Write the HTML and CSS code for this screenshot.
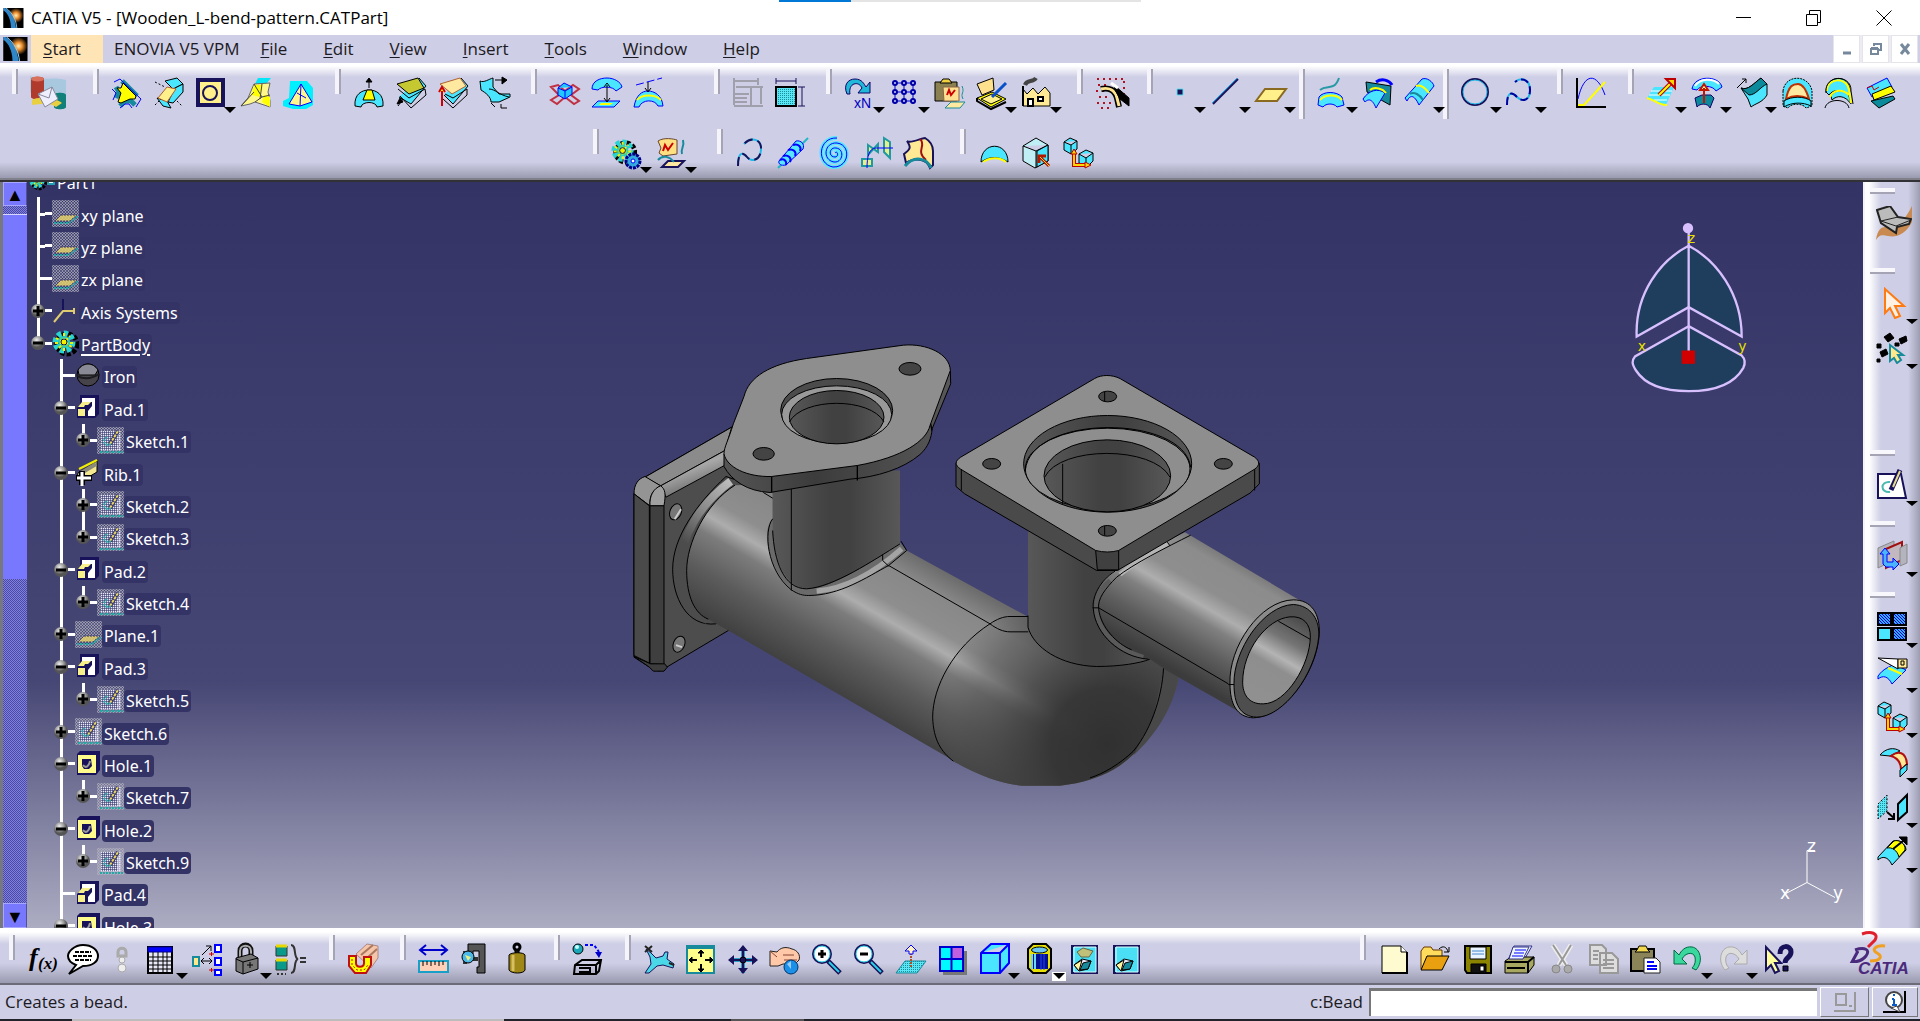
FILE: index.html
```html
<!DOCTYPE html>
<html lang="en">
<head>
<meta charset="utf-8">
<title>CATIA V5 - [Wooden_L-bend-pattern.CATPart]</title>
<link rel="stylesheet" href="styles.css">
</head>
<body>
<svg class="defs" aria-hidden="true">
  <defs>
    <linearGradient id="earth" x1="0" y1="1" x2="1" y2="0"><stop offset=".3" stop-color="#2f86c8"/><stop offset=".48" stop-color="#7cc4ee"/><stop offset=".52" stop-color="#000"/></linearGradient>
    <radialGradient id="sun"><stop offset="0" stop-color="#fff3c0"/><stop offset=".4" stop-color="#f09030"/><stop offset="1" stop-color="#f09030" stop-opacity="0"/></radialGradient>
    <radialGradient id="ball" cx=".4" cy=".3"><stop offset="0" stop-color="#eee"/><stop offset=".6" stop-color="#999"/><stop offset="1" stop-color="#555"/></radialGradient>
    <pattern id="dots" width="3" height="3" patternUnits="userSpaceOnUse"><circle cx="1.5" cy="1.5" r="1" fill="none" stroke="#b4b4c0" stroke-width=".9"/></pattern>
    <pattern id="whitedots" width="2" height="2" patternUnits="userSpaceOnUse"><rect width="1.4" height="1.4" fill="#e8e8ff"/></pattern>
    <pattern id="mesh" width="2" height="2" patternUnits="userSpaceOnUse"><rect width="2" height="2" fill="#5ae6f5"/><rect width="1" height="1" fill="#1a8f9c"/></pattern>
    <pattern id="bluemesh" width="3" height="3" patternUnits="userSpaceOnUse"><rect width="3" height="3" fill="#39a8ff"/><path d="M0 0L3 3" stroke="#00c"/></pattern>
  </defs>
  <symbol id="app" viewBox="0 0 24 24"><path d="M0 0H24V24H0Z" fill="#000"/><circle cx="15" cy="9" r="9" fill="url(#sun)"/><path d="M2 0C10 5 14 14 15 24H9C9 14 5 6 0 3V0Z" fill="#2f86c8"/><path d="M3 0C11 6 15 14 16 24" fill="none" stroke="#8fd4ff"/><path d="M0 3C5 8 8 15 8 24H0Z" fill="#000"/></symbol>
  <symbol id="plus" viewBox="0 0 14 14"><circle cx="7" cy="7" r="7" fill="url(#ball)"/><path d="M7 2V12M2 7H12" stroke="#000" stroke-width="3"/></symbol>
  <symbol id="minus" viewBox="0 0 14 14"><circle cx="7" cy="7" r="7" fill="url(#ball)"/><path d="M2 7H12" stroke="#000" stroke-width="3"/></symbol>
  <symbol id="plane" viewBox="0 0 27 27"><path d="M0 0H27V27H0Z" fill="url(#dots)"/><path d="M9 15H25L18 21H3Z" fill="#e8d568" fill-opacity=".8" stroke="#333366" stroke-dasharray="2 1"/><path d="M2 23H17L26 16" fill="none" stroke="#27a6a6" stroke-width="2" stroke-dasharray="2 1"/></symbol>
  <symbol id="sketch" viewBox="0 0 27 27"><path d="M0 0H27V27H0Z" fill="url(#dots)"/><path d="M4 4H20V23H4Z" fill="#333366"/><path d="M4 4H24V24H4Z" fill="url(#whitedots)"/><path d="M13 17L21 4" stroke="#333366" stroke-width="4"/><path d="M13 17L21 4" stroke="#e8d568" stroke-width="2" stroke-dasharray="3 1"/><path d="M10 10C4 14 8 20 14 17M3 25H27" fill="none" stroke="#27a6a6" stroke-width="2" stroke-dasharray="2 1"/></symbol>
  <symbol id="pad" viewBox="0 0 27 27"><path d="M5 1H24V20L20 24H2V14L5 11Z" fill="#18125a"/><path d="M7 4H20V22H13V17L17 12V8H11L7 11Z" fill="#fff"/><path d="M3 15H10V22H3ZM3 13L7 8H16L13 11H10L9 13Z" fill="#f7f08a"/></symbol>
  <symbol id="hole" viewBox="0 0 27 27"><path d="M5 1H25V20L21 25H2V4Z" fill="#18125a"/><path d="M3 5H21V23H3Z" fill="#fffa8c"/><path d="M7 9H16L17 16L14 19H9L7 16Z" fill="#18125a"/><path d="M8 15C11 19 14 16 15 11" fill="none" stroke="#999" stroke-width="2"/></symbol>
  <symbol id="gear" viewBox="0 0 27 27"><circle cx="15" cy="14" r="10" fill="none" stroke="#000" stroke-width="5" stroke-dasharray="4 2"/><circle cx="12" cy="12" r="8.500" fill="none" stroke="#26d4d4" stroke-width="6" stroke-dasharray="4 2.600"/><circle cx="12" cy="12" r="6" fill="#2fd0b0"/><path d="M4 8L20 17M7 18L18 6M12 3V21M3 13H21" stroke="#f3f000" stroke-width="2" stroke-dasharray="3 2"/><circle cx="12" cy="12" r="3" fill="#f3f000" stroke="#115"/></symbol>
  <symbol id="boxes" viewBox="0 0 32 32"><path d="M2 5L8 1L15 4V12L9 17L2 13Z M2 5L9 8L15 4M9 8V17M17 17L24 13L31 16V24L25 30L17 26Z M17 17L24 21L31 16M24 21V30" class="fc"/><path d="M12 15V28H25" fill="none" stroke="#b00" stroke-width="4"/><path d="M12 14V28H27" fill="none" stroke="#ffd800" stroke-width="2"/><path d="M9 17L12 12L15 17ZM23 25L29 28L23 31Z" fill="#ffd800" stroke="#b00"/></symbol>
</svg>

<div class="app">
  <header class="titlebar">
    <div class="progress"><i></i></div>
    <svg class="logo-sm"><use href="#app"/></svg>
    <h1>CATIA V5 - [Wooden_L-bend-pattern.CATPart]</h1>
    <div class="winctl">
      <button aria-label="Minimize"><svg viewBox="0 0 16 16"><path d="M0 7.500H15"/></svg></button>
      <button aria-label="Restore"><svg viewBox="0 0 16 16"><path d="M.5 4.500H11.500V15.500H.5ZM3.500 4.500V.5H14.500V12.500H11.500"/></svg></button>
      <button aria-label="Close"><svg viewBox="0 0 16 16"><path d="M.5 .5L15.500 15.500M15.500 .5L.5 15.500"/></svg></button>
    </div>
  </header>

  <nav class="menubar">
    <svg class="logo-md"><use href="#app"/></svg>
    <button class="start"><u>S</u>tart</button>
    <button class="vpm">ENOVIA V5 VPM</button>
    <button><u>F</u>ile</button>
    <button><u>E</u>dit</button>
    <button><u>V</u>iew</button>
    <button><u>I</u>nsert</button>
    <button><u>T</u>ools</button>
    <button><u>W</u>indow</button>
    <button><u>H</u>elp</button>
    <div class="mdi">
      <button aria-label="Minimize document"><svg viewBox="0 0 16 16"><path d="M4 12H12" stroke-width="3"/></svg></button>
      <button aria-label="Restore document"><svg viewBox="0 0 16 16"><path d="M3 8H10V13H3ZM3 7H10M6 5V3H13V9H11M6 3H13" stroke-width="2"/></svg></button>
      <button aria-label="Close document"><svg viewBox="0 0 16 16"><path d="M4 3L12 13M12 3L4 13" stroke-width="3"/></svg></button>
    </div>
  </nav>

  <div class="toolbar">
    <div class="row row-top">
      <div class="group">
        <button aria-label="Save data in database"><svg class="wide" viewBox="0 0 36 34"><path d="M0 0C12 6 20 0 36 4V24C20 20 10 26 0 16Z" fill="#a8c8e0" stroke="none"/><path d="M1 3C1 0 14 0 14 3V21C14 24 1 24 1 21Z" fill="#b03a2c" stroke="none"/><ellipse cx="7.500" cy="3" rx="6.500" ry="2.500" fill="#d8705c" stroke="none"/><path d="M24 19C24 16 36 16 36 19V31C36 34 24 34 24 31Z" fill="#12807a" stroke="none"/><path d="M2 24C8 20 26 22 32 27L26 31C20 26 10 28 2 29Z" fill="#e8d040" stroke="none"/><path d="M8 18L22 11L28 23L15 31Z" fill="#eef" stroke="#889"/><path d="M8 18L19 22L22 11" fill="none" stroke="#889"/></svg></button>
      </div>
      <div class="group">
        <button aria-label="Junction"><svg viewBox="0 0 32 32"><path d="M11 4L26 19M5 10L8 15L5 21M9 29L14 24H20L24 28" fill="none" stroke="#178a9c" stroke-width="5"/><path d="M3 5L9 2L30 22L25 30M1 12L5 16L2 23M9 31L14 27H18L21 31" fill="none" class="sb"/><path d="M12 6L25 19L24 22H19L10 26L7 25L10 16L6 11L10 11Z" class="fy"/></svg></button>
        <button aria-label="Bend"><svg viewBox="0 0 32 32"><path d="M12 4L24 1L30 7L20 12ZM4 21L14 24L18 31L10 29Z" class="fc"/><path d="M22 11L30 7V15L20 26L15 25Z" class="fc"/><path d="M14 10L23 12L14 25L5 21Z" class="fp" stroke="#b06030"/><path d="M2 5L12 10M2 28L8 22M24 24L29 29" stroke-dasharray="2 2"/></svg></button>
        <button class="dd" aria-label="Hole"><svg viewBox="0 0 32 32"><path d="M3 3H28V28H3Z" fill="#fff08c" stroke="#18125a" stroke-width="4"/><circle cx="15" cy="16" r="7" fill="none" stroke="#18125a" stroke-width="2"/></svg></button>
        <button aria-label="Flange"><svg viewBox="0 0 32 32"><path d="M18 1H31L26 7H15Z" fill="#00e8f8" stroke="none"/><path d="M14 7L30 6L28 15L30 24V30L15 25L10 27L1 29L8 21Z" fill="#fff78c" stroke="#666"/><path d="M14 8L22 8L20 20L12 18ZM24 18L30 20V30L22 25Z" class="fy" stroke="none"/><path d="M14 7L22 20L30 18M22 20L15 25M22 7L20 22M1 29L14 15" fill="none" stroke="#444"/></svg></button>
        <button aria-label="Extrusion"><svg viewBox="0 0 32 32"><path d="M8 4L25 4L31 11V28L24 32H11L1 29V24L7 21Z" fill="#00f0ff" stroke="none"/><path d="M19 7L30 25L18 29L7 27Z" fill="#fff78c" class="sb"/><path d="M19 7L18 29M15 16L24 21" fill="none" class="sb"/></svg></button>
      </div>
      <div class="group">
        <button aria-label="Bump"><svg viewBox="0 0 32 32"><path d="M2 29C1 17 9 13 16 13S31 17 30 29L24 30C23 24 9 24 8 30Z" class="fc"/><path d="M10 23L14 13H19L22 23Z" class="fy"/><path d="M16 11V4" /><path d="M13 5L16 1L19 5Z" class="fk"/></svg></button>
        <button aria-label="Wrap curve"><svg viewBox="0 0 32 32"><path d="M24 1L31 9L16 27L4 20" class="fc" /><path d="M2 7L23 1L29 11L14 17Z" fill="#c6c832"/><path d="M3 12L14 21L30 12L31 18L16 31L5 19M3 29L8 22" fill="none"/><path d="M5 21L2 27L8 25Z" class="fk"/></svg></button>
        <button aria-label="Wrap surface"><svg viewBox="0 0 32 32"><path d="M24 1L31 9L16 27L7 18" class="fc"/><path d="M3 7L23 1L29 9L15 17Z" fill="#ffe9a0" stroke="#b06030"/><path d="M8 17L16 21L30 12V18L16 31L6 22" fill="none"/><path d="M5 29V14M2 15L5 10L8 15" stroke="#c00" class="fy" stroke-width="2"/></svg></button>
        <button aria-label="Shape morphing"><svg viewBox="0 0 32 32"><path d="M1 4C5 6 10 2 14 1V10L20 17H31V20L20 25H12C12 20 7 16 2 13Z" class="fc"/><path d="M10 12C16 12 20 18 30 20M16 3H26M12 26L16 30M22 27V31H28" fill="none"/><path d="M23 0L28 3L23 7Z" class="fk"/></svg></button>
      </div>
      <div class="group">
        <button aria-label="Axis transformation"><svg viewBox="0 0 32 32"><path d="M2 10L9 8L16 14L24 8L30 12L22 18L30 24L25 27L16 20L8 27L2 23L10 18Z" fill="none" stroke="#c03040" stroke-width="2"/><path d="M9 11L15 6L23 10V17L16 22L9 18ZM9 11L16 14L23 10M16 14V22" fill="#20c8ff" class="sb"/></svg></button>
        <button aria-label="Transfer"><svg viewBox="0 0 32 32"><path d="M1 12C1 4 9 1 16 1S30 5 31 10L25 14C22 9 10 9 7 13Z" class="fc sb"/><path d="M7 24H29L23 30H1Z" class="fc sb"/><path d="M10 26H22L19 28H8Z" class="fy" stroke="none"/><path d="M16 8V24M13 10L16 6L19 10M13 21L16 25L19 21" fill="none"/></svg></button>
        <button aria-label="Project"><svg viewBox="0 0 32 32"><path d="M3 8L29 1" class="sb" stroke-dasharray="8 3"/><path d="M1 30C3 18 9 14 15 14S29 18 30 29L25 29C22 22 9 22 6 30Z" class="fc sb"/><path d="M4 23C9 17 22 17 28 23" fill="none" class="sy"/><path d="M15 5V14M12 11L15 15L18 11" fill="none"/></svg></button>
      </div>
      <div class="group">
        <button aria-label="Dimensions off" class="off"><svg viewBox="0 0 32 32"><path d="M2 1V28M26 1V8M2 4H26M4 10H19V28M14 10H31M29 10V27M2 17H17M2 21H15M2 25H15M2 29H31" fill="none" stroke="#a0a0ac" stroke-width="2"/></svg></button>
        <button aria-label="Dimensions"><svg viewBox="0 0 32 32"><path d="M2 10H22V29H2Z" fill="url(#mesh)"/><path d="M2 1V7M22 1V7M2 4H22M24 10H31M24 29H31M28 10V29" fill="none" stroke="#18125a"/><path d="M2 10H22V29H2Z" fill="none" stroke-width="2"/></svg></button>
      </div>
      <div class="group">
        <button class="dd" aria-label="Object repetition"><svg viewBox="0 0 32 32"><path d="M3 17C-1 8 4 2 11 2S20 7 22 10L26 5V16H14L18 11C16 7 13 6 10 7S5 12 6 17Z" fill="#20b8d8" stroke="#106"/><text x="10" y="31" class="xn">xN</text></svg></button>
        <button class="dd" aria-label="Points and planes repetition"><svg viewBox="0 0 32 32"><path d="M6 3V27M15 3V27M24 3V27M3 6H27M3 15H27M3 24H27" fill="none" stroke="#00c"/><g fill="#cecee6" stroke="#00a" stroke-width="2"><circle cx="6" cy="6" r="2"/><circle cx="15" cy="6" r="2"/><circle cx="24" cy="6" r="2"/><circle cx="6" cy="15" r="2"/><circle cx="15" cy="15" r="2"/><circle cx="24" cy="15" r="2"/><circle cx="6" cy="24" r="2"/><circle cx="15" cy="24" r="2"/><circle cx="24" cy="24" r="2"/></g></svg></button>
        <button aria-label="Paste geometry"><svg viewBox="0 0 32 32"><path d="M1 5H23V24H1Z" fill="#8a8050"/><path d="M6 6L9 2H15L18 6Z" fill="#f0d040"/><path d="M9 10H25V24H10Z" fill="#ffe090" stroke="#864"/><path d="M13 18L15 13L17 18L21 13" fill="none" stroke="#c00" stroke-width="2"/><path d="M17 25H31L26 31H11ZM28 9C31 16 26 16 29 22" fill="#ffe9a0" stroke="#178a9c"/></svg></button>
        <button class="dd" aria-label="Catalog"><svg viewBox="0 0 32 32"><path d="M1 7L17 1L18 13L6 18Z" fill="#ffe08c"/><path d="M1 21L16 15L30 22L15 30Z" class="fy"/><path d="M5 22L16 17L26 22L15 27Z" class="fp"/><path d="M1 21V24L15 32L30 25" fill="none" stroke-width="2"/><path d="M30 6L16 20" stroke="#0a50c8" stroke-width="3"/></svg></button>
        <button class="dd" aria-label="Power copy"><svg viewBox="0 0 32 32"><path d="M2 12L6 17L12 11L17 17L24 10L29 16V29H2Z" fill="#ffe994"/><path d="M2 9V29M7 22H12V29H7ZM17 20H22V24H17Z" fill="#fff" stroke-width="2"/><path d="M4 8C6 2 12 6 15 1" fill="none" stroke="#444" stroke-width="4"/></svg></button>
      </div>
      <div class="group">
        <button aria-label="Optimizer"><svg viewBox="0 0 36 34" class="wide"><path d="M2 3H28M3 9H12M1 15H10M4 21H14M2 27H18M6 32H18M29 5V18" stroke="#b01020" stroke-width="2" stroke-dasharray="2 4"/><path d="M6 13C14 11 20 14 22 22L24 31" fill="none" stroke="#000" stroke-width="6"/><path d="M6 13C14 11 20 14 22 22L24 30" fill="none" stroke="#ffe490" stroke-width="3"/><path d="M19 9L34 22V30L25 23L20 14Z" class="fk"/><path d="M16 7L23 12" stroke="#fff" stroke-width="3"/></svg></button>
      </div>
      <div class="group">
        <button class="dd" aria-label="Point"><svg viewBox="0 0 32 32"><path d="M12 12H18V18H12Z" fill="#18125a" stroke="#5ae0f0"/></svg></button>
        <button class="dd" aria-label="Line"><svg viewBox="0 0 32 32"><path d="M3 27L28 2" stroke="#18125a" stroke-width="2"/><path d="M2 26L27 1" stroke="#20a8e8"/></svg></button>
        <button class="dd" aria-label="Plane"><svg viewBox="0 0 32 32"><path d="M10 12H31L22 24H1Z" class="fp" stroke="#8a6a20" stroke-width="2"/></svg></button>
      </div>
      <div class="group bar">
        <button class="dd" aria-label="Sweep"><svg viewBox="0 0 32 32"><path d="M3 13C10 7 17 15 22 1" fill="none" stroke="#279aa6" stroke-width="2"/><path d="M2 20C6 14 20 14 25 20L27 28L20 30C17 26 9 26 6 30L1 28Z" class="fc sb"/><path d="M3 23C8 17 20 17 25 23" fill="none" class="sy"/></svg></button>
        <button aria-label="Adaptive sweep"><svg viewBox="0 0 32 32"><path d="M4 5L29 9L28 28L5 15Z" fill="#178a9c"/><path d="M14 5C20 1 27 3 30 8" fill="none" class="sb" stroke-width="3"/><path d="M1 22C7 13 16 11 23 16L14 31C10 21 6 22 3 25Z" class="fc sb"/><path d="M8 13C13 9 21 12 24 16" fill="none" class="sy" stroke-width="3"/></svg></button>
        <button class="dd" aria-label="Loft"><svg viewBox="0 0 32 32"><path d="M1 21L18 2C23 0 29 5 30 9L15 28C10 17 6 18 3 24Z" class="fc sb"/><path d="M12 9C17 7 22 12 25 16" fill="none" class="sy"/><path d="M6 17C10 14 16 18 19 23" fill="none" stroke="#178a9c" stroke-width="2"/></svg></button>
      </div>
      <div class="group bar">
        <button class="dd" aria-label="Circle"><svg viewBox="0 0 32 32"><circle cx="14" cy="15" r="13" fill="none" stroke="#18125a" stroke-width="2"/><circle cx="14" cy="15" r="12" fill="none" stroke="#20b8e8"/></svg></button>
        <button class="dd" aria-label="Spline"><svg viewBox="0 0 32 32"><path d="M1 28C1 14 6 15 11 20S24 24 24 13S15 0 9 5" fill="none" stroke="#20b8e8" stroke-width="2"/><path d="M1 28C1 14 6 15 11 20S24 24 24 13S15 0 9 5" fill="none" stroke="#00009c" stroke-width="2" stroke-dasharray="8 4"/></svg></button>
      </div>
      <div class="group">
        <button aria-label="Law"><svg viewBox="0 0 32 32"><path d="M2 1V30H31" fill="none" stroke-width="2"/><path d="M3 22C9-5 22-5 30 18" fill="none" class="sb"/><path d="M3 28H9L30 5" fill="none" class="sy" stroke-width="3"/></svg></button>
      </div>
      <div class="group">
        <button class="dd" aria-label="Extrapolate"><svg viewBox="0 0 32 32"><path d="M1 21L8 10H28L20 28C12 27 8 22 1 21Z" class="fc" stroke="none"/><path d="M5 14H26M3 18H24M8 23H21" stroke="#fff"/><path d="M1 21C9 23 14 29 21 28" fill="none" class="sy" stroke-width="3"/><path d="M13 18L24 7" stroke="#b00" stroke-width="4"/><path d="M13 18L24 7" class="sy"/><path d="M20 2H29V11L26 8L23 5Z" stroke="#b00" fill="#ffd800" stroke-width="2"/></svg></button>
        <button class="dd" aria-label="Offset"><svg viewBox="0 0 32 32"><path d="M1 12C3-2 28-2 31 10L25 14C22 8 9 8 6 13Z" class="fc sb"/><path d="M4 9C9 1 22 1 28 7" fill="none" stroke="#fff" stroke-width="2"/><path d="M4 21L11 18H20L23 21L19 31C17 26 9 26 6 30Z" fill="#0a8a9a" stroke="#106"/><path d="M13 26V11M9 13L13 7L17 13Z" fill="#ffa" stroke="#c01800" stroke-width="2"/></svg></button>
        <button class="dd" aria-label="Thick surface"><svg viewBox="0 0 32 32"><path d="M5 11C12 14 18 6 25 1L31 7V18C26 26 20 26 15 30L12 22Z" class="fc"/><path d="M5 11C12 14 18 6 25 1L31 7C24 10 20 18 13 18Z" fill="#0a8a9a"/><path d="M1 11L10 2M6 2H10V6" fill="none"/></svg></button>
        <button aria-label="Fillet"><svg viewBox="0 0 32 32"><path d="M2 14C4-3 28-3 31 14V29L25 31C22 26 10 26 7 31L2 29Z" class="fc" stroke-dasharray="2 1"/><path d="M5 22C8 8 12 7 17 7S25 12 28 22C20 18 12 18 5 22Z" fill="#ffe9a0" stroke="#c03000" stroke-width="2"/><path d="M3 24C10 19 24 19 30 24V29C22 25 11 25 3 30Z" class="fc"/></svg></button>
        <button aria-label="Shape fillet"><svg viewBox="0 0 32 32"><path d="M3 15C3-3 27-3 27 14L26 18C19 12 10 12 6 18Z" class="fc"/><path d="M8 19C12 12 22 12 26 19L28 27C22 18 14 18 9 23Z" class="fc"/><path d="M2 31C4 21 24 21 26 31" fill="none"/><path d="M4 14C4 0 25 0 26 13L28 26M7 20C11 12 20 12 26 18" fill="none" class="sy"/><path d="M3 16C1-3 29-3 28 14L30 27" fill="none"/></svg></button>
        <button aria-label="Healing"><svg viewBox="0 0 32 32"><path d="M2 11L22 1L27 10L7 20Z" class="fc sb"/><path d="M7 17L26 9L30 15L9 23Z" class="fy"/><path d="M6 24L28 19L30 22L14 31Z" fill="#0a8a9a"/><path d="M2 11L7 9L9 13L14 10" fill="none" stroke="#c00"/></svg></button>
      </div>
    </div>
    <div class="row row-second">
      <div class="group">
        <button class="dd" aria-label="Bodies"><svg viewBox="0 0 32 32"><use href="#gear" width="26" height="30"/><circle cx="22" cy="24" r="7" fill="#3ad" stroke="#008" stroke-width="3" stroke-dasharray="3 1"/><circle cx="22" cy="24" r="2" fill="#fff" class="sb"/></svg></button>
        <button class="dd" aria-label="Geometrical set"><svg viewBox="0 0 32 32"><path d="M2 4C8 0 18 2 21 3V17L7 19L3 16L5 11Z" fill="#ffe080" stroke="#643"/><path d="M7 14L9 8L12 13L17 6" fill="none" stroke="#c00" stroke-width="2"/><path d="M12 24H28L22 30H6Z" fill="#ffe9a0" stroke="#18125a" stroke-width="2"/><path d="M2 23C7 17 14 20 18 25M27 3C29 10 24 12 26 17" fill="none" stroke="#178a9c" stroke-width="2"/></svg></button>
      </div>
      <div class="group">
        <button aria-label="Curve"><svg viewBox="0 0 32 32"><path d="M3 29C3 14 8 15 12 20S25 24 26 13S16-1 9 7" fill="none" stroke="#20b8e8" stroke-width="2"/><path d="M3 29C3 14 8 15 12 20S25 24 26 13S16-1 9 7" fill="none" stroke="#18125a" stroke-width="2" stroke-dasharray="9 5"/></svg></button>
        <button aria-label="Helix"><svg viewBox="0 0 32 32"><path d="M1 31L31 1" stroke="#20b8c8" stroke-width="2"/><path d="M2 24L19 4C24 3 28 7 26 12L9 28C4 29 1 27 2 24Z" fill="#5ae6ff" class="sb"/><path d="M6 19C11 17 15 21 13 25M11 13C16 11 20 15 18 19M16 8C21 6 25 10 23 14M3 23C7 21 10 24 9 28" fill="none" class="sb" stroke-width="2"/></svg></button>
        <button aria-label="Spiral"><svg viewBox="0 0 32 32"><path d="M16 16C19 13 20 20 16 20C9 20 10 10 17 11C26 12 24 26 15 25C3 23 5 5 18 6C33 8 30 31 14 30C-3 27-1 0 18 1" fill="none" stroke="#5ae6ff" stroke-width="4"/><path d="M16 16C19 13 20 20 16 20C9 20 10 10 17 11C26 12 24 26 15 25C3 23 5 5 18 6C33 8 30 31 14 30C-3 27-1 0 18 1" fill="none" class="sb"/></svg></button>
        <button aria-label="Spine"><svg viewBox="0 0 32 32"><path d="M1 22H11V29H1ZM7 8L17 15V7L7 18ZM23 1L29 5V21L23 15Z" fill="#e8f08c" stroke="#209aa0" stroke-width="2"/><path d="M6 31C6 20 8 11 15 11H32" fill="none" class="sb"/></svg></button>
        <button aria-label="Isoparametric curve"><svg viewBox="0 0 32 32"><path d="M4 4C8 7 18 1 22 1C27 4 30 8 30 14V28L27 31C24 22 12 20 3 26L1 17C8 12 8 10 4 4Z" fill="#ffe994" stroke="#18125a" stroke-width="2"/><path d="M17 2C24 8 12 14 23 23" fill="none" stroke="#a01010" stroke-width="2"/><path d="M2 29C11 18 24 21 28 31" fill="none" stroke="#178a9c" stroke-width="3"/></svg></button>
      </div>
      <div class="group">
        <button aria-label="Bead"><svg viewBox="0 0 32 32"><path d="M3 25C3 4 30 4 30 25C20 19 12 19 3 25Z" class="fc"/><path d="M5 25C12 20 22 20 28 25" fill="none" class="sy" stroke-width="4"/></svg></button>
        <button aria-label="Extract box"><svg viewBox="0 0 32 32"><path d="M3 9L16 1L28 8V24L15 31L3 24ZM3 9L16 14L28 8M16 14V31" fill="#bfeef5"/><path d="M17 14L28 8V24L17 30Z" class="fc"/><path d="M29 29L20 20M19 26V19H26" fill="none" stroke="#b01800" stroke-width="3"/><path d="M29 29L20 20" stroke="#ffd800"/></svg></button>
        <button aria-label="Translate bodies"><svg viewBox="0 0 32 32"><use href="#boxes"/></svg></button>
      </div>
    </div>
  </div>

  <main class="work">
    <div class="scroll" role="presentation">
      <button aria-label="Scroll up">▲</button>
      <div class="track"><div class="thumb"></div></div>
      <button aria-label="Scroll down">▼</button>
    </div>
    <div class="viewport">
      <svg class="scene" viewBox="27 182 1836 745" aria-label="3D view">
        <defs>
          <linearGradient id="pipe" gradientUnits="userSpaceOnUse" x1="-69" y1="120" x2="-309" y2="534"><stop offset="0" stop-color="#6c6c6c"/><stop offset=".14" stop-color="#888"/><stop offset=".34" stop-color="#8e8e8e"/><stop offset=".44" stop-color="#adadad"/><stop offset=".54" stop-color="#7c7c7c"/><stop offset=".75" stop-color="#5c5c5c"/><stop offset="1" stop-color="#404040"/></linearGradient>
          <linearGradient id="pipe2" gradientUnits="userSpaceOnUse" x1="42" y1="73" x2="-148" y2="402"><stop offset="0" stop-color="#777"/><stop offset=".1" stop-color="#8c8c8c"/><stop offset=".32" stop-color="#8e8e8e"/><stop offset=".45" stop-color="#aeaeae"/><stop offset=".56" stop-color="#808080"/><stop offset=".75" stop-color="#5e5e5e"/><stop offset="1" stop-color="#3c3c3c"/></linearGradient>
          <linearGradient id="bore" x1=".85" y1="0" x2=".4" y2="1"><stop offset="0" stop-color="#484848"/><stop offset=".3" stop-color="#747474"/><stop offset=".5" stop-color="#b4b4b4"/><stop offset=".62" stop-color="#8e8e8e"/><stop offset="1" stop-color="#909090"/></linearGradient>
          <linearGradient id="vert"><stop offset="0" stop-color="#585858"/><stop offset=".45" stop-color="#414141"/><stop offset=".6" stop-color="#414141"/><stop offset="1" stop-color="#585858"/></linearGradient>
          <radialGradient id="dark" gradientUnits="userSpaceOnUse" cx="1460" cy="1240" r="560"><stop offset="0" stop-color="#303030"/><stop offset=".3" stop-color="#333" stop-opacity=".95"/><stop offset=".5" stop-color="#3c3c3c" stop-opacity=".75"/><stop offset=".75" stop-color="#4c4c4c" stop-opacity=".45"/><stop offset="1" stop-color="#666" stop-opacity="0"/></radialGradient>
          <linearGradient id="edge"><stop offset="0" stop-color="#555"/><stop offset=".4" stop-color="#3c3c3c"/><stop offset="1" stop-color="#585858"/></linearGradient>
          <linearGradient id="round" x1="0" y1="0" x2=".5" y2="1"><stop offset="0" stop-color="#8d8d8d"/><stop offset=".5" stop-color="#a8a8a8"/><stop offset="1" stop-color="#606060"/></linearGradient>
          <linearGradient id="fillet" gradientUnits="userSpaceOnUse" x1="330" y1="450" x2="200" y2="640"><stop offset="0" stop-color="#bdbdbd"/><stop offset=".5" stop-color="#8a8a8a"/><stop offset="1" stop-color="#4c4c4c"/></linearGradient>
        </defs>
        <g transform="translate(620 330) scale(.33333)" stroke="#000" stroke-width="3" stroke-linejoin="round">
          <!-- rear flange -->
          <path d="M42 490L75 440L335 290L440 470V840L325 900L140 1010L118 1022L92 1012L42 980Z" fill="#4d4d4d"/>
          <path d="M75 440L335 290L315 360L122 466Z" fill="#8b8b8b"/>
          <path d="M122 466L315 360V404L138 500Z" fill="url(#round)"/>
          <path d="M42 490C42 460 56 444 75 438L122 466C95 480 88 500 90 526Z" fill="#949494"/>
          <path d="M90 526C88 496 100 474 122 466C136 476 138 490 132 526Z" fill="#a0a0a0"/>
          <path d="M42 490L88 526V998L42 975Z" fill="#4a4a4a"/><path d="M90 526H132V1002L90 1000Z" fill="#3f3f3f"/>
          <path d="M42 978L92 1000H134L142 1010L132 1022H100L88 1010Z" fill="#3d3d3d"/>
          <ellipse cx="167" cy="544" rx="17" ry="25" transform="rotate(22 167 544)" fill="#777"/><ellipse cx="177" cy="941" rx="17" ry="25" transform="rotate(22 177 941)" fill="#777"/>
          <path d="M164 566L183 536M168 944L186 950" stroke="#ccc" stroke-width="6"/>
          <!-- main tube and its root fillet -->
          <path d="M318 438C230 520 158 620 158 716C158 800 200 890 288 880L400 800L440 480Z" fill="#4c4c4c"/>
          <path d="M332 452C240 520 180 620 180 716C178 790 205 850 262 868" fill="none" stroke="url(#fillet)" stroke-width="24"/>
          <path d="M345 464C255 520 200 640 200 720C200 800 225 850 265 866L325 900L1000 1290L1230 1220L1240 868L860 660L500 460Z" fill="url(#pipe)" stroke="none"/>
          <path d="M345 464C255 520 200 640 200 720C200 800 225 850 265 866" fill="none"/>
          <!-- elbow -->
          <path d="M1110 880C1000 950 938 1070 938 1160C940 1230 965 1265 1000 1292C1090 1345 1170 1365 1220 1366H1320C1390 1358 1440 1340 1480 1318C1580 1260 1660 1130 1676 1040L1590 860H1225C1170 856 1140 860 1110 880Z" fill="url(#pipe)" stroke="none"/>
          <path d="M1110 880C1000 950 938 1070 938 1160C940 1230 965 1265 1000 1292C1090 1345 1170 1365 1220 1366H1320C1390 1358 1440 1340 1480 1318C1580 1260 1660 1130 1676 1040L1590 860H1225C1170 856 1140 860 1110 880Z" fill="url(#dark)" stroke="none"/>
          <path d="M1676 1040C1660 1130 1610 1210 1540 1275L1600 1160L1631 1010Z" fill="#484848" stroke="none"/>
          <path d="M1110 880C1000 950 938 1070 938 1160C940 1230 965 1265 1000 1292M1631 1000C1630 1080 1600 1190 1540 1262C1500 1300 1450 1330 1410 1342M788 690L806 705L1110 880C1130 895 1150 904 1170 904H1225M1110 880C1130 866 1150 858 1170 858H1225" fill="none"/>
          <!-- first branch -->
          <path d="M458 470H840V636L860 660L806 705C740 740 640 795 565 795C500 790 440 700 441 610C442 590 450 570 458 565Z" fill="#6a6a6a" stroke="none"/>
          <path d="M590 782C670 776 760 730 845 655" fill="none" stroke="#a4a4a4" stroke-width="16"/>
          <path d="M458 420H840V638C760 690 640 775 560 775C500 775 460 690 458 600Z" fill="url(#vert)" stroke="none"/>
          <path d="M458 565C430 600 440 720 514 778C535 792 550 795 565 795C660 795 740 740 806 705L860 660L843 632M458 600C462 690 490 775 560 775C640 770 760 690 840 640M514 475V780M788 672V690L806 707M430 486L458 503" fill="none"/>
          <path d="M312 370V408C335 450 380 482 450 486L690 446C770 440 850 415 900 372C925 350 935 320 936 296L992 160L991 120Z" fill="url(#edge)"/>
          <path d="M340 280L372 198C386 140 450 100 560 84L850 44C920 38 990 70 991 120L930 285C920 330 850 380 712 405L455 438C380 440 320 410 312 370C312 350 325 330 340 280Z" fill="#8e8e8e"/>
          <path d="M455 438V486M712 405V450M932 280L936 300" fill="none" stroke-width="4"/>
          <ellipse cx="650" cy="240" rx="168" ry="96" fill="#4b4b4b"/><ellipse cx="650" cy="252" rx="165" ry="86" fill="#999"/><ellipse cx="650" cy="260" rx="142" ry="80" fill="url(#vert)"/>
          <path d="M508 274C550 200 750 200 792 274" fill="none"/>
          <ellipse cx="870" cy="115" rx="33" ry="19" fill="#444"/><ellipse cx="431" cy="370" rx="32" ry="19" fill="#444"/>
        </g>
        <g transform="translate(920 360) scale(.33333)" stroke="#000" stroke-width="3" stroke-linejoin="round">
          <!-- second branch -->
          <path d="M324 500V800C340 860 420 915 530 918C600 918 660 908 690 896L700 560Z" fill="url(#vert)" stroke="none"/>
          <path d="M324 765V800C340 860 420 915 530 918C600 918 660 908 690 896" fill="none"/>
          <!-- outlet tube -->
          <path d="M585 630C540 660 515 710 520 745C525 820 600 890 690 896L740 930L960 1055L1140 720L795 515L700 560Z" fill="url(#pipe2)"  stroke="none"/>
          <path d="M570 660C530 690 524 740 532 770C545 820 600 870 670 890" fill="none" stroke="#5a5a5a" stroke-width="14"/>
          <path d="M600 642C640 610 690 580 745 548" fill="none" stroke="#b4b4b4" stroke-width="14"/>
          <path d="M585 632C540 660 515 710 520 745C525 820 600 890 685 896M812 524C740 560 640 610 590 650C555 685 532 715 536 745C542 800 590 850 635 868M518 742H536L925 970M742 545L750 556" fill="none"/>
          <path d="M930 970C925 860 1020 720 1120 718C1175 718 1200 760 1198 820C1190 940 1090 1070 1000 1072C950 1070 930 1030 930 970Z" fill="#8a8a8a"/>
          <path d="M942 970C940 870 1030 735 1120 732C1175 735 1200 780 1196 830C1186 940 1090 1070 1010 1070C960 1068 942 1030 942 970Z" fill="#4e4e4e"/>
          <path d="M968 965C968 870 1040 775 1110 769C1150 766 1172 790 1171 830C1170 910 1100 1030 1030 1030C985 1032 968 1000 968 965Z" fill="url(#bore)"/>
          <path d="M1075 782L1170 836M925 972H942" fill="none"/>
          <!-- square flange -->
          <path d="M108 308V378L134 400L530 630H592L990 398L1018 370V308Z" fill="#4a4a4a"/>
          <path d="M527 570H596V628H532Z" fill="#404040"/>
          <path d="M524 54C545 42 575 42 600 54L1004 290C1020 302 1020 314 1004 326L596 570C575 576 550 576 527 570L122 326C104 314 104 302 122 290Z" fill="#8e8e8e"/>
          <path d="M124 326V390M1004 326V390" fill="none"/>
          <ellipse cx="563" cy="310" rx="252" ry="145" fill="url(#vert)"/><ellipse cx="563" cy="325" rx="247" ry="122" fill="#8e8e8e"/><path d="M316 330C330 160 790 160 812 320" fill="none"/>
          <ellipse cx="562" cy="346" rx="190" ry="108" fill="url(#vert)"/><path d="M374 350C420 255 700 255 750 350M428 310V430" fill="none"/>
          <g fill="#444"><ellipse cx="563" cy="108" rx="27" ry="16"/><ellipse cx="215" cy="310" rx="27" ry="16"/><ellipse cx="910" cy="310" rx="27" ry="16"/><ellipse cx="562" cy="511" rx="27" ry="16"/></g><path d="M554 94V122M554 497V525" fill="none"/>
        </g>
        <!-- compass -->
        <g transform="translate(1600 180) scale(.33333)" stroke="#d8c0ff" stroke-width="7" fill="#1f3d5c">
          <path d="M266 196C180 240 105 340 110 468L266 380L425 468C425 340 350 240 266 196Z"/>
          <path d="M266 437L105 528C95 540 95 550 108 570C140 620 200 632 266 632S400 615 430 562C438 545 435 535 425 525Z"/>
          <path d="M266 145V520"/><circle cx="264" cy="143" r="12" fill="#d8c0ff"/><path d="M245 510H285V550H245Z" fill="#d00000" stroke="none"/>
          <g class="axis-y"><text x="263" y="187">z</text><text x="113" y="513">x</text><text x="415" y="513">y</text></g>
        </g>
        <g class="triad"><path d="M1807 882V850H1815M1807 882L1784 894M1807 882L1835 897" fill="none" stroke="#fff"/><text x="1807" y="851">z</text><text x="1780" y="898">x</text><text x="1833" y="898">y</text></g>
      </svg>

      <ul class="tree">
        <li class="l0"><svg class="ic"><use href="#gear"/></svg><em></em><span>Part1</span></li>
        <li class="l1 v1"><b></b><i></i><svg class="ic"><use href="#plane"/></svg><span>xy plane</span></li>
        <li class="l1 v1"><b></b><i></i><svg class="ic"><use href="#plane"/></svg><span>yz plane</span></li>
        <li class="l1 v1"><b></b><i></i><svg class="ic"><use href="#plane"/></svg><span>zx plane</span></li>
        <li class="l1 v1"><svg class="nd"><use href="#plus"/></svg><i></i><svg class="ic" viewBox="0 0 27 27"><path d="M11 2V14" stroke="#18125a" stroke-width="2"/><path d="M2 25L11 14H23M22 11V17" fill="none" stroke="#e0cc70" stroke-width="2"/></svg><span>Axis Systems</span></li>
        <li class="l1 v1 end1"><svg class="nd"><use href="#minus"/></svg><i></i><svg class="ic"><use href="#gear"/></svg><span class="work-obj">PartBody</span></li>
        <li class="l2 v2"><b></b><i></i><svg class="ic" viewBox="0 0 27 27"><circle cx="13" cy="13" r="11" fill="#46444a"/><path d="M3 8C8 0 18 0 23 8L20 13H4Z" fill="#8a8a96"/><path d="M2 14C10 18 18 16 24 12" fill="none" stroke="#1c1c20" stroke-width="2"/></svg><span>Iron</span></li>
        <li class="l2 v2"><svg class="nd"><use href="#minus"/></svg><i></i><svg class="ic"><use href="#pad"/></svg><span>Pad.1</span></li>
        <li class="l3 v2 v3 end3"><svg class="nd"><use href="#plus"/></svg><i></i><svg class="ic"><use href="#sketch"/></svg><span>Sketch.1</span></li>
        <li class="l2 v2"><svg class="nd"><use href="#minus"/></svg><i></i><svg class="ic" viewBox="0 0 27 27"><path d="M3 14L22 2V13L12 19H2Z" fill="#f4e890" stroke="#000"/><path d="M6 14L21 5" stroke="#8c8a78" stroke-width="4"/><path d="M4 10L22 1" stroke="#f3f000" stroke-width="2"/><path d="M7 12V26M1 19H17" stroke="#000" stroke-width="6"/><path d="M7 13V27M2 19H16" stroke="#fff" stroke-width="3"/></svg><span>Rib.1</span></li>
        <li class="l3 v2 v3"><svg class="nd"><use href="#plus"/></svg><i></i><svg class="ic"><use href="#sketch"/></svg><span>Sketch.2</span></li>
        <li class="l3 v2 v3 end3"><svg class="nd"><use href="#plus"/></svg><i></i><svg class="ic"><use href="#sketch"/></svg><span>Sketch.3</span></li>
        <li class="l2 v2"><svg class="nd"><use href="#minus"/></svg><i></i><svg class="ic"><use href="#pad"/></svg><span>Pad.2</span></li>
        <li class="l3 v2 v3 end3"><svg class="nd"><use href="#plus"/></svg><i></i><svg class="ic"><use href="#sketch"/></svg><span>Sketch.4</span></li>
        <li class="l2 v2"><svg class="nd"><use href="#plus"/></svg><i></i><svg class="ic"><use href="#plane"/></svg><span>Plane.1</span></li>
        <li class="l2 v2"><svg class="nd"><use href="#minus"/></svg><i></i><svg class="ic"><use href="#pad"/></svg><span>Pad.3</span></li>
        <li class="l3 v2 v3 end3"><svg class="nd"><use href="#plus"/></svg><i></i><svg class="ic"><use href="#sketch"/></svg><span>Sketch.5</span></li>
        <li class="l2 v2"><svg class="nd"><use href="#plus"/></svg><i></i><svg class="ic"><use href="#sketch"/></svg><span>Sketch.6</span></li>
        <li class="l2 v2"><svg class="nd"><use href="#minus"/></svg><i></i><svg class="ic"><use href="#hole"/></svg><span>Hole.1</span></li>
        <li class="l3 v2 v3 end3"><svg class="nd"><use href="#plus"/></svg><i></i><svg class="ic"><use href="#sketch"/></svg><span>Sketch.7</span></li>
        <li class="l2 v2"><svg class="nd"><use href="#minus"/></svg><i></i><svg class="ic"><use href="#hole"/></svg><span>Hole.2</span></li>
        <li class="l3 v2 v3 end3"><svg class="nd"><use href="#plus"/></svg><i></i><svg class="ic"><use href="#sketch"/></svg><span>Sketch.9</span></li>
        <li class="l2 v2"><b></b><i></i><svg class="ic"><use href="#pad"/></svg><span>Pad.4</span></li>
        <li class="l2 v2"><svg class="nd"><use href="#minus"/></svg><i></i><svg class="ic"><use href="#hole"/></svg><span>Hole.3</span></li>
      </ul>
    </div>

    <aside class="side">
      <div class="vgroup">
        <button aria-label="Workbench"><svg class="wide" viewBox="0 0 36 34"><path d="M0 34C2 20 8 20 14 22S30 12 36 0V16C30 28 20 32 12 30S3 30 0 34Z" fill="#c98a52" stroke="none"/><path d="M1 4L14 0L22 11L35 13L33 18L21 21L20 27L5 17Z" fill="#bbb" stroke="#222" stroke-width="2"/><path d="M5 15L22 11M5 15L20 20L35 14" fill="none" stroke="#222"/></svg></button>
      </div>
      <div class="vgroup">
        <button class="dd" aria-label="Select"><svg viewBox="0 0 32 32"><path d="M9 2V26L14 21L19 31L24 29L19 19H28Z" fill="#fff0e4" stroke="#ff7a10" stroke-width="2"/></svg></button>
        <button class="dd" aria-label="Select trap"><svg viewBox="0 0 32 32"><path d="M8 5L14 1L18 6L12 10ZM23 7L30 4L31 9L25 12ZM4 20L10 17L12 22L6 25ZM1 12H5V16H1ZM1 27H4V30H1ZM19 11H23V14H19Z" class="fk"/><path d="M14 13V29L18 26L21 31L25 28L22 23H27Z" fill="#ffe98c" stroke="#178a9c" stroke-width="2"/></svg></button>
      </div>
      <div class="vgroup">
        <button class="dd" aria-label="Sketcher"><svg viewBox="0 0 32 32"><path d="M2 5H25L30 29H2Z" fill="#fff" stroke="#18125a" stroke-width="2"/><path d="M14 13C4 12 4 24 14 23" fill="none" stroke="#4cb8b0" stroke-width="2"/><path d="M24 1L15 21" stroke="#18125a" stroke-width="5"/><path d="M24 2L17 18" stroke="#e8dc8c" stroke-width="2"/></svg></button>
      </div>
      <div class="vgroup">
        <button class="dd" aria-label="Body in white"><svg viewBox="0 0 32 32"><path d="M2 8L18 1V20L2 28Z" fill="#b4b4be" stroke="#888"/><path d="M10 9L26 2V20L10 28Z" fill="#c4b8c0" stroke="#a01010" stroke-width="2"/><path d="M24 8L31 4V23L24 26Z" fill="#b4b4be" stroke="#888"/><path d="M7 24V14H4L9 8L14 14H11V22H17V18L23 24L17 30V27H10Z" fill="#4ab4ff" class="sb"/></svg></button>
      </div>
      <div class="vgroup">
        <button class="dd" aria-label="Assemble"><svg viewBox="0 0 32 32"><path d="M2 2H15V14H2ZM17 2H30V14H17ZM17 17H30V29H17Z" fill="url(#bluemesh)" stroke-width="2"/><path d="M2 17H15V29H2Z" class="fc" stroke-width="2"/></svg></button>
        <button class="dd" aria-label="Split"><svg viewBox="0 0 32 32"><path d="M2 20C8 12 12 12 18 8L30 14L16 28C12 20 7 19 2 23Z" class="fc sb"/><path d="M2 2L22 3V13Z" fill="#fff"/><path d="M12 12L26 18" class="sy" stroke-width="3"/><path d="M22 3H31V12H22ZM25 5H28V9H25Z" fill="#ffe994"/></svg></button>
        <button class="dd" aria-label="Translate"><svg viewBox="0 0 32 32"><use href="#boxes"/></svg></button>
        <button class="dd" aria-label="Edge fillet"><svg viewBox="0 0 32 32"><path d="M4 9C10 2 18 1 24 5L14 10Z" class="fc"/><path d="M15 10C22 4 30 6 31 18L25 24C25 16 22 12 15 10Z" fill="#ffe994" stroke="#b01010" stroke-width="2"/><path d="M24 24L31 18V24L24 31Z" class="fc"/></svg></button>
        <button class="dd" aria-label="Translate copy"><svg viewBox="0 0 32 32"><path d="M2 13L11 4V20L2 28Z" fill="url(#mesh)" stroke-dasharray="2 2"/><path d="M22 13L31 4V21L22 29Z" class="fc" stroke-width="2"/><path d="M11 21L18 27M18 22V28H12" fill="none" stroke-width="2"/></svg></button>
        <button class="dd" aria-label="Extrapolate surface"><svg viewBox="0 0 32 32"><path d="M2 21L17 5C23 3 30 8 30 14L16 29C12 20 6 20 2 24Z" class="fc"/><path d="M11 12L18 5C23 3 30 8 29 14L23 21C21 14 16 11 11 12Z" class="fy"/><path d="M17 13L27 5" stroke-width="2"/><path d="M23 1H31V9Z" class="fk"/></svg></button>
      </div>
    </aside>
  </main>

  <div class="bottombar">
    <div class="group tight">
      <button aria-label="Formula"><svg viewBox="0 0 32 32"><text x="2" y="23" class="fx">f</text><text x="11" y="26" class="fx2">(x)</text></svg></button>
      <button aria-label="Comment"><svg viewBox="0 0 32 32"><path d="M16 2C25 2 31 7 31 13S25 23 16 23L2 31L9 22C4 20 1 17 1 13S7 2 16 2Z" fill="#fff" stroke-width="2"/><path d="M8 9H24M6 13H26M8 17H24" stroke-width="2" stroke-dasharray="4 1"/></svg></button>
      <button aria-label="Link" class="off"><svg viewBox="0 0 32 32"><path d="M11 13V9C11 4 19 4 19 9V13Z" fill="none" stroke="#aaa" stroke-width="3"/><circle cx="15" cy="17" r="3" fill="#eee" stroke="#aaa"/><circle cx="15" cy="25" r="4" fill="#eee" stroke="#aaa"/></svg></button>
      <button class="dd" aria-label="Design table"><svg viewBox="0 0 32 32"><path d="M1 4H25V30H1Z" fill="#e8e8f8" stroke-width="2"/><path d="M1 4H25V9H1Z" fill="#00f" stroke="#008"/><path d="M6 9V30M11 9V30M16 9V30M20 9V30M1 14H25M1 18H25M1 22H25M1 26H25"/></svg></button>
      <button aria-label="Relations"><svg viewBox="0 0 32 32"><path d="M2 14H8V23H2Z" fill="#ffe98c" stroke="#178a9c" stroke-width="2"/><g fill="#fff" class="sb" stroke-width="2"><path d="M24 2H30V9H24ZM24 15H30V22H24ZM24 27H30V32H24Z"/></g><path d="M10 18H21M13 15L10 18L13 21M18 15L21 18L18 21M11 12L20 3M15 3H20V8" fill="none"/><path d="M18 11H23M20.500 9V13M18 27H23M20.500 25V29" stroke="#c00"/></svg></button>
      <button class="dd" aria-label="Lock"><svg viewBox="0 0 32 32"><path d="M9 14V8C9 0 20 0 20 8V14" fill="none" stroke="#111" stroke-width="5"/><path d="M9 14V8C9 1 20 1 20 8V14" fill="none" stroke="#aaa" stroke-width="2"/><path d="M5 15L20 11L27 15V26L12 31L5 28Z" fill="#777"/><path d="M5 16L12 19L27 15M12 19V31M19 19V25M16 22H22" fill="none"/></svg></button>
      <button aria-label="Equivalent dimensions"><svg viewBox="0 0 32 32"><path d="M1 3H12V13H1ZM1 17H12V27H1Z" fill="#0a9a8a" stroke="#333"/><path d="M1 3H12M1 17H12" stroke="#e8d800" stroke-width="3"/><path d="M16 2C22 2 18 15 23 16C18 17 22 30 16 30M25 15H31M25 19H31" fill="none" stroke="#333" stroke-width="2"/><path d="M2 31H11" stroke="#333" stroke-width="2" stroke-dasharray="2 2"/></svg></button>
    </div>
    <div class="group">
      <button aria-label="Apply material"><svg viewBox="0 0 32 32"><path d="M9 11L20 1L31 3V15L24 25Z" fill="#f6c4a8" stroke="#a88"/><path d="M14 12L26 2M19 16L30 6" stroke="#a87860" stroke-width="2"/><path d="M2 13H9V20C9 25 17 25 17 20V14H24V22L19 30H8L2 23Z" class="fy" stroke="#c01010" stroke-width="2"/><path d="M5 16V22L10 27H17L21 22" fill="none" stroke="#c01010" stroke-dasharray="2 2"/></svg></button>
    </div>
    <div class="group">
      <button aria-label="Measure between"><svg viewBox="0 0 32 32"><path d="M2 7H29M8 2L2 7L8 12M23 2L29 7L23 12" fill="none" stroke="#00c" stroke-width="2"/><path d="M1 18H30V29H1Z" fill="#ffd0b8" stroke="#18a0c8" stroke-width="2"/><path d="M5 18V23M9 18V22M13 18V23M17 18V22M21 18V23M25 18V22"/></svg></button>
      <button aria-label="Measure item"><svg viewBox="0 0 32 32"><path d="M8 1H25V30H17V24H19V8H13V11H8Z" fill="#555"/><path d="M5 8V21M13 16H18" stroke="#333" stroke-width="4"/><circle cx="8" cy="14" r="6" fill="#4ab8e8"/><path d="M5 12L11 14L8 18Z" fill="#e8f080" stroke="none"/></svg></button>
      <button aria-label="Measure inertia"><svg viewBox="0 0 32 32"><circle cx="15" cy="4" r="3" fill="none" stroke-width="3"/><path d="M13 7H17V12H13Z" fill="#111"/><path d="M7 12C9 9 22 9 23 12V27C22 31 9 31 7 27Z" fill="#a08818"/><path d="M11 12V28" stroke="#d8c060" stroke-width="3"/></svg></button>
    </div>
    <div class="group">
      <button aria-label="Create datum"><svg viewBox="0 0 32 32"><circle cx="6" cy="6" r="5" fill="#1aa8b8"/><circle cx="5" cy="4" r="2" fill="#cff" stroke="none"/><path d="M13 2H22L27 9" fill="none" class="sb" stroke-width="2" stroke-dasharray="3 2"/><path d="M23 9H30L27 15Z" fill="#00c" stroke="none"/><path d="M3 22L10 17H29L27 28L24 31H2ZM3 22H24L29 17M24 22V30M7 25H18V29H7" fill="none" stroke-width="2"/></svg></button>
    </div>
    <div class="group">
      <button aria-label="Fly mode"><svg viewBox="0 0 32 32"><path d="M3 6L8 10L13 15L20 13L22 9L25 9L24 16L31 21L30 25L20 22L14 23L6 30L2 30L8 21L7 14Z" fill="#4ad8e8" stroke="#18125a"/><path d="M2 3L9 9M9 3L2 9M26 20L31 22" stroke="#222" stroke-width="2"/></svg></button>
      <button aria-label="Fit all in"><svg viewBox="0 0 32 32"><path d="M2 4H29V30H2Z" fill="#ffff8c" stroke="#178a9c" stroke-width="2"/><path d="M1 4H30" stroke="#178a9c" stroke-width="4"/><path d="M16 14V8M16 21V27M12 17H6M20 17H26" stroke-width="2"/><path d="M13 10L16 7L19 10ZM13 26L16 29L19 26ZM7 14L4 17L7 20ZM25 14L28 17L25 20Z" class="fk"/></svg></button>
      <button aria-label="Pan"><svg viewBox="0 0 32 32"><path d="M16 4V30M3 17H29" stroke="#2aa0c8" stroke-width="4"/><path d="M16 4V30M3 17H29" stroke="#18125a" stroke-width="2"/><path d="M11 8L16 2L21 8ZM11 25L16 31L21 25ZM7 12L1 17L7 22ZM25 12L31 17L25 22Z" fill="#18125a" stroke="none"/><circle cx="16" cy="17" r="3" fill="#18125a"/></svg></button>
      <button aria-label="Rotate"><svg viewBox="0 0 32 32"><path d="M1 8V23H9L14 21H26L30 17C32 12 28 7 23 6C16 3 11 5 8 9Z" fill="#ffc8a8" stroke="#222"/><path d="M14 12H25M15 17H28M1 8L8 14" fill="none" stroke="#843"/><circle cx="22" cy="24" r="7" fill="#1a90e8" stroke="#036"/><path d="M18 21L22 18V26Z" fill="#9cf" stroke="none"/></svg></button>
      <button aria-label="Zoom in"><svg viewBox="0 0 32 32"><path d="M17 18L29 30" stroke="#18125a" stroke-width="5"/><path d="M18 19L28 29" stroke="#2ad0e8" stroke-width="2"/><circle cx="11" cy="11" r="9" fill="#fff" stroke="#18125a" stroke-width="2"/><circle cx="11" cy="11" r="8" fill="none" stroke="#2ad0e8"/><path d="M11 7V15M7 11H15" stroke-width="3"/></svg></button>
      <button aria-label="Zoom out"><svg viewBox="0 0 32 32"><path d="M17 18L29 30" stroke="#18125a" stroke-width="5"/><path d="M18 19L28 29" stroke="#2ad0e8" stroke-width="2"/><circle cx="11" cy="11" r="9" fill="#fff" stroke="#18125a" stroke-width="2"/><circle cx="11" cy="11" r="8" fill="none" stroke="#2ad0e8"/><path d="M7 11H15" stroke-width="3"/></svg></button>
      <button aria-label="Normal view"><svg viewBox="0 0 32 32"><path d="M10 18H31L22 30H1Z" fill="url(#mesh)" stroke="#178a9c"/><path d="M16 24V8" stroke="#b05020" stroke-width="2" stroke-dasharray="2 1"/><path d="M10 8L16 2L22 8H18V11H14V8Z" fill="#fff0c0" class="sb"/></svg></button>
      <button aria-label="Create multi-view"><svg viewBox="0 0 32 32"><path d="M6 8H30V32H6Z" fill="#777" stroke="none"/><path d="M3 4H26V28H3Z" fill="#00f8ff" stroke="#00c" stroke-width="2"/><path d="M15 5H25V15H15Z" fill="#c060e0" stroke="none"/><path d="M14.500 4V28M3 16H26" stroke="#00c" stroke-width="2"/></svg></button>
      <button class="dd" aria-label="Isometric view"><svg viewBox="0 0 32 32"><path d="M2 10L12 1H30V20L21 30H2ZM2 10H21L30 1M21 10V30" class="fc sb" stroke-width="2"/></svg></button>
      <button class="dd hot" aria-label="Shading with edges"><svg viewBox="0 0 32 32"><path d="M4 6L9 1H22L27 6V25L22 30H9L4 25Z" fill="#e8e000" stroke-width="2"/><path d="M7 11H24V26H7Z" fill="#001090" stroke="none"/><path d="M8 11V26M11 11V26" stroke="#6ad8f0" stroke-width="2"/><ellipse cx="15.500" cy="7" rx="8" ry="3" fill="#6ac8f0"/><path d="M17 11V27M20 11V27" stroke="#24f"/></svg></button>
      <button aria-label="Hide/Show"><svg viewBox="0 0 32 32"><path d="M3 3H28V30H3Z" fill="#4adff5" stroke="#18125a" stroke-width="2"/><path d="M5 4V29H27V4Z" fill="none" stroke="#dff"/><path d="M8 9L14 5L24 8L20 14H12Z" fill="#c0c078" stroke="#664"/><path d="M5 22L13 16L22 18L19 26L10 28Z" fill="#eef"/><path d="M5 22L13 17L10 28Z" fill="#fff8a0"/><path d="M14 20L22 18L19 26L11 27Z" fill="#178a9c"/></svg></button>
      <button aria-label="Swap visible space"><svg viewBox="0 0 32 32"><path d="M3 3H28V30H3Z" fill="#4adff5" stroke="#18125a" stroke-width="2"/><path d="M5 4V29H27V4Z" fill="none" stroke="#dff"/><path d="M5 22L13 16L22 18L19 26L10 28Z" fill="#eef"/><path d="M5 22L13 17L10 28Z" fill="#fff8a0"/><path d="M14 20L22 18L19 26L11 27Z" fill="#178a9c"/></svg></button>
    </div>
    <div class="group">
      <button aria-label="New"><svg viewBox="0 0 32 32"><path d="M4 3H23L29 9V30H4Z" fill="#fffbd0"/><path d="M29 9V30H4" fill="none" stroke-width="2"/><path d="M23 3V9H29" fill="#fff"/></svg></button>
      <button aria-label="Open"><svg viewBox="0 0 32 32"><path d="M1 8L4 4H11L13 7H22V26H1Z" fill="#ffdc5c" stroke="#630"/><path d="M7 13H29L22 27H1Z" fill="#e8a010"/><path d="M19 6C23 2 27 4 28 9M24 9H29V4" fill="none"/></svg></button>
      <button aria-label="Save"><svg viewBox="0 0 32 32"><path d="M3 3H29V30H5L3 27Z" fill="#8a8400" stroke-width="2"/><path d="M8 4H24V16H8Z" fill="#e8f4ff"/><path d="M10 8H22M10 11H22" stroke="#48c"/><path d="M9 21H24V30H9Z" fill="#111"/><path d="M18 23H22V28H18Z" fill="#fff"/></svg></button>
      <button aria-label="Print"><svg viewBox="0 0 32 32"><path d="M10 3H28L20 17H4Z" fill="#eef6ff" stroke="#338"/><path d="M12 6H24M10 10H22M8 13H20" class="sb"/><path d="M1 18L7 14H30V22L24 30H1Z" fill="#a8a860"/><path d="M9 4L5 16H19L25 4Z" fill="#eef6ff" stroke="#338"/><path d="M11 7H22M10 10H20M8 13H19" class="sb"/><path d="M1 19H24L30 14M24 19V30M3 25H21" fill="none" stroke-width="2"/></svg></button>
      <button aria-label="Cut" class="off"><svg viewBox="0 0 32 32"><path d="M7 2L20 22M25 2L13 22" stroke="#eee" stroke-width="5"/><path d="M7 2L20 22M25 2L13 22" stroke="#999" stroke-width="2"/><circle cx="10" cy="26" r="4" fill="#aaa" stroke="#888"/><circle cx="22" cy="26" r="4" fill="#aaa" stroke="#888"/></svg></button>
      <button aria-label="Copy" class="off"><svg viewBox="0 0 32 32"><path d="M2 2H14L18 6V22H2ZM12 10H24L30 16V30H12Z" fill="#ddd" stroke="#999" stroke-width="2"/><path d="M5 8H11M5 12H10M5 16H10M15 17H26M15 21H26M15 25H26" stroke="#999" stroke-width="2"/></svg></button>
      <button aria-label="Paste"><svg viewBox="0 0 32 32"><path d="M1 6H24V28H1Z" fill="#8a8458" stroke-width="2"/><path d="M7 7L9 3H16L18 7L20 9H5Z" fill="#f0d850"/><path d="M14 15H26L30 19V30H14Z" fill="#fff" stroke="#222"/><path d="M17 19H24M17 23H27M17 26H27" class="sb" stroke-width="2"/></svg></button>
      <button class="dd" aria-label="Undo"><svg viewBox="0 0 32 32"><path d="M2 7V21H15L10 16C13 10 21 8 23 14C24 20 22 23 20 25L24 27C32 18 28 5 20 4C13 3 9 8 7 12Z" fill="#3ad89c" stroke="#064"/></svg></button>
      <button class="dd off" aria-label="Redo"><svg viewBox="0 0 32 32"><path d="M30 7V21H17L22 16C19 10 11 8 9 14C8 20 10 23 12 25L8 27C0 18 4 5 12 4C19 3 23 8 25 12Z" fill="#ddd" stroke="#aaa"/></svg></button>
      <button aria-label="What's this"><svg viewBox="0 0 32 32"><path d="M4 4V27L9 22L13 30L17 28L13 20H19Z" fill="#ffff9c" stroke="#18125a" stroke-width="2"/><path d="M18 11C18 1 29 2 29 9C29 15 23 14 23 20" fill="none" stroke="#18125a" stroke-width="5"/><path d="M21 23H26V28H21Z" fill="#18125a"/></svg></button>
    </div>
    <div class="brand">
      <svg viewBox="0 0 50 32"><path d="M13 3C22 0 30 2 26 9L19 16" fill="none" stroke="#e0202c" stroke-width="3"/><path d="M6 19C15 16 22 18 17 25C13 30 8 31 3 31L9 20" fill="none" stroke="#4a2a7c" stroke-width="3"/><path d="M36 15C26 14 22 19 28 22S32 30 21 30" fill="none" stroke="#f0a020" stroke-width="3"/></svg>
      <span>CATIA</span>
    </div>
  </div>

  <footer class="status">
    <span class="hint">Creates a bead.</span>
    <label for="cmd">c:Bead</label>
    <input id="cmd" type="text">
    <button class="off" aria-label="Power input"><svg viewBox="0 0 24 22"><path d="M3 3H13V14H3ZM16 15H19M22 1V20H1" fill="none" stroke="#999" stroke-width="2"/></svg></button>
    <button aria-label="Messages"><svg viewBox="0 0 24 22"><path d="M22 0V21H0" fill="none" stroke-width="2"/><circle cx="11" cy="9" r="8" fill="#fff" stroke="#444" stroke-width="2"/><path d="M14 15L17 21L8 17Z" fill="#fff" stroke="#444"/><path d="M11 8V14M9 8H11M9 14H14M10 4H12" stroke="#0a5ac8" stroke-width="2"/></svg></button>
  </footer>
  <div class="taskedge"><i></i><i></i><i></i><i></i></div>
</div>
</body>
</html>
```
FILE: styles.css
```css
* { box-sizing: border-box; }
html, body { height: 100%; margin: 0; }
body { font: 17px/20px "Open Sans", "Noto Sans", sans-serif; color: #1c1a22; overflow: hidden; }
button { margin: 0; padding: 0; border: 0; background: none; font: inherit; color: inherit; }
svg { display: block; stroke: #000; stroke-width: 1; }
symbol, use, .defs { stroke: none; }
.defs { position: absolute; width: 0; height: 0; }
.fy { fill: #ffff00; } .fc { fill: #4ae6ff; } .fp { fill: #fff08c; } .fk { fill: #000; }
.sb { stroke: #0000ff; } .sy { stroke: #ffff00; stroke-width: 2; }
#boxes .fc { stroke: #000; }

.app { height: 100%; display: grid; grid-template-rows: 35px 28px 119px 1fr 57px 34px 2px; background: #cecee6; }

/* title */
.titlebar { position: relative; display: flex; align-items: center; gap: 7px; padding: 0 28px 0 3px; background: #fff; }
.titlebar h1 { margin: 0; font-size: 17px; font-weight: 400; color: #000; }
.progress { position: absolute; top: 0; left: 779px; width: 362px; height: 2px; background: #e4e4e4; }
.progress i { display: block; width: 72px; height: 2px; background: #0078d7; }
.logo-sm { width: 21px; height: 20px; }
.winctl { display: flex; gap: 54px; margin-left: auto; }
.winctl svg { width: 16px; height: 16px; fill: none; }

/* menu */
.menubar { display: flex; align-items: stretch; padding-right: 2px; }
.menubar > button { padding: 0 18px; text-underline-offset: 2px; }
.logo-md { width: 31px; height: 26px; padding: 2px 1px 0; }
.menubar > .start { width: 72px; padding: 0 20px 0 10px; background: #ffe4b5; }
.menubar > .vpm { padding: 0 3px 0 11px; }
.mdi { display: flex; gap: 2px; margin-left: auto; background: #ececf2; }
.mdi button { width: 27px; display: grid; place-items: center; background: #fff; border: 1px solid #e4e4ea; }
.mdi svg { width: 16px; height: 16px; stroke: #76899c; fill: none; }

/* toolbars */
.toolbar { padding-top: 6px; border-bottom: 4px solid #80808a; border-bottom-style: ridge;
  background: linear-gradient(#fff 0 3px, #cecee6 14px calc(100% - 16px), #9a9ab0 100%); }
.row { display: grid; height: 60px; }
.row-top { grid-template-columns: 81px 242px 196px 183px 112px 251px 70px 152px 144px 114px 71px 1fr; padding-left: 12px; }
.row-second { height: 49px; grid-template-columns: 124px 243px 1fr; padding-left: 593px; }
.group { display: flex; align-items: flex-start; }
.group::before { content: ""; flex: none; width: 4px; height: 25px; margin-right: 12px; background: #f4f4fa; border-right: 2px solid #a4a4b4; }
.group.bar::before { height: 50px; }
.group button { position: relative; flex: none; width: 42px; height: 40px; padding-top: 7px; }
.group button.dd { width: 45px; }
.group.tight button { width: 40px; } .group.tight button.dd { width: 44px; }
.group svg { width: 32px; height: 32px; overflow: visible; }
.group svg.wide, .vgroup svg.wide { width: 36px; height: 34px; }
.dd::after { content: ""; position: absolute; left: 29px; top: 38px; border: 6px solid transparent; border-top-color: #000; border-bottom: 0; }
.hot::before { content: ""; position: absolute; left: 28px; top: 37px; width: 14px; height: 9px; background: #fff; }
.xn { font: 14px "Liberation Sans", sans-serif; fill: #0000c0; stroke: none; }
.fx { font: italic 700 26px "Liberation Serif", serif; fill: #000; stroke: none; }
.fx2 { font: italic 700 17px "Liberation Serif", serif; fill: #000; stroke: none; }

/* work area */
.work { display: grid; grid-template-columns: 27px 1fr 57px; min-height: 0; }
.scroll { display: grid; grid-template-rows: 24px 1fr 25px; padding-left: 3px; background: #77777f; min-height: 0; }
.scroll button { background: #7878ff; border: 1px solid #a8a8ff; border-right-color: #5050a0; color: #000; font-size: 18px; line-height: 20px; }
.track { padding-top: 8px; background: repeating-conic-gradient(#4a4aa0 0 25%, #8080e4 0 50%) 0 0 / 2px 2px; }
.thumb { height: 53%; background: #7878ff; border-top: 1px solid #d8d8ff; }
.viewport { display: grid; min-width: 0; min-height: 0; overflow: hidden; background: linear-gradient(#333366, #474775 67%, #acacc2); }
.scene, .tree { grid-area: 1 / 1; }
.scene { width: 100%; height: 100%; min-height: 0; }
.axis-y text { font: 42px "DejaVu Sans", sans-serif; fill: #e8e000; stroke: none; }
.triad text { font: 17px "DejaVu Sans", sans-serif; fill: #fff; stroke: none; }

.tree { list-style: none; display: grid; grid-auto-rows: 1fr; width: max-content; min-height: 0; margin: -17px 0 -14px; padding: 0; font-family: "Noto Sans", "Open Sans", sans-serif; font-size: 16px; color: #fff; z-index: 1; }
.tree li { display: flex; align-items: center; min-height: 0; background-repeat: no-repeat; background-size: 3px 100%, 3px 100%; }
.tree .l0 { padding-left: 2px; }
.tree .l0 .ic { width: 18px; }
.tree em { width: 8px; height: 8px; background: #fff; border: 2px solid #20a0b0; }
.tree .l1 { padding-left: 4px; } .tree .l2 { padding-left: 27px; } .tree .l3 { padding-left: 49px; }
.tree .nd, .tree b { flex: none; width: 14px; height: 14px; }
.tree b { background: linear-gradient(#fff, #fff) 7px 6px / 7px 3px no-repeat; }
.tree i { flex: none; width: 7px; height: 3px; background: #fff; }
.tree .ic { flex: none; width: 27px; height: 27px; }
.tree span { margin-top: 4px; padding: 0 2px; border-radius: 4px; line-height: 22px; background: #333366; }
.tree .work-obj { text-decoration: underline; text-decoration-thickness: 2px; text-underline-offset: 3px; }
.v1 { background-image: linear-gradient(#fff, #fff); background-position: 10px 0; }
.v2 { background-image: linear-gradient(#fff, #fff); background-position: 33px 0; }
.v2.v3 { background-image: linear-gradient(#fff, #fff), linear-gradient(#fff, #fff); background-position: 33px 0, 55px 0; }
.tree .end1 { background-size: 3px 50%; }
.tree .end3 { background-size: 3px 100%, 3px 50%; }

/* side toolbar */
.side { padding: 6px 0 0 5px; background: linear-gradient(90deg, #fff 0 4px, #cecee6 16px calc(100% - 12px), #9c9cb2); display: grid; grid-template-rows: 80px 182px 71px 71px 1fr; align-content: start; border-left: 2px solid #f4f4f8; }
.vgroup::before { content: ""; display: block; width: 25px; height: 4px; background: #f8f8fc; border-bottom: 2px solid #a4a4b4; }
.vgroup { min-height: 0; }
.vgroup button { position: relative; display: block; width: 45px; height: 45px; padding: 12px 0 0 6px; }
.vgroup svg { width: 32px; height: 32px; }
.vgroup .dd::after { left: 36px; top: 45px; border-width: 5px 6px 0; }

/* bottom */
.bottombar { display: grid; grid-template-columns: 320px 71px 154px 71px 735px 1fr 71px; padding: 7px 0 0 9px; border-bottom: 2px solid #6c6c78; background: linear-gradient(#fff 0 4px, #cecee6 16px calc(100% - 20px), #9a9ab0 100%); min-height: 0; }
.brand { color: #4a2a7c; font: italic 700 17px/12px "Liberation Sans", sans-serif; }
.brand svg { width: 50px; height: 32px; margin: -4px 0 0; }
.brand span { display: block; padding-left: 9px; }
.status { display: grid; grid-template-columns: 1fr auto 448px 52px 49px; align-items: center; padding: 2px 2px 2px 5px; }
.status label { padding-right: 6px; }
.status input { width: 100%; height: 28px; border: 0; border-left: 2px solid #777; border-top: 3px solid #777; background: #fff; font: inherit; }
.status button { height: 30px; margin-left: 3px; display: grid; place-items: center; border: 1px solid #fff; border-right-color: #777; border-bottom-color: #777; }
.status svg { width: 24px; height: 22px; }
.taskedge { display: grid; grid-template-columns: 72px 432px 227px 73px 1fr; background: #20242a; }
.taskedge i:nth-child(2) { background: #bcbcbc; } .taskedge i:nth-child(4) { background: #555; }
```
